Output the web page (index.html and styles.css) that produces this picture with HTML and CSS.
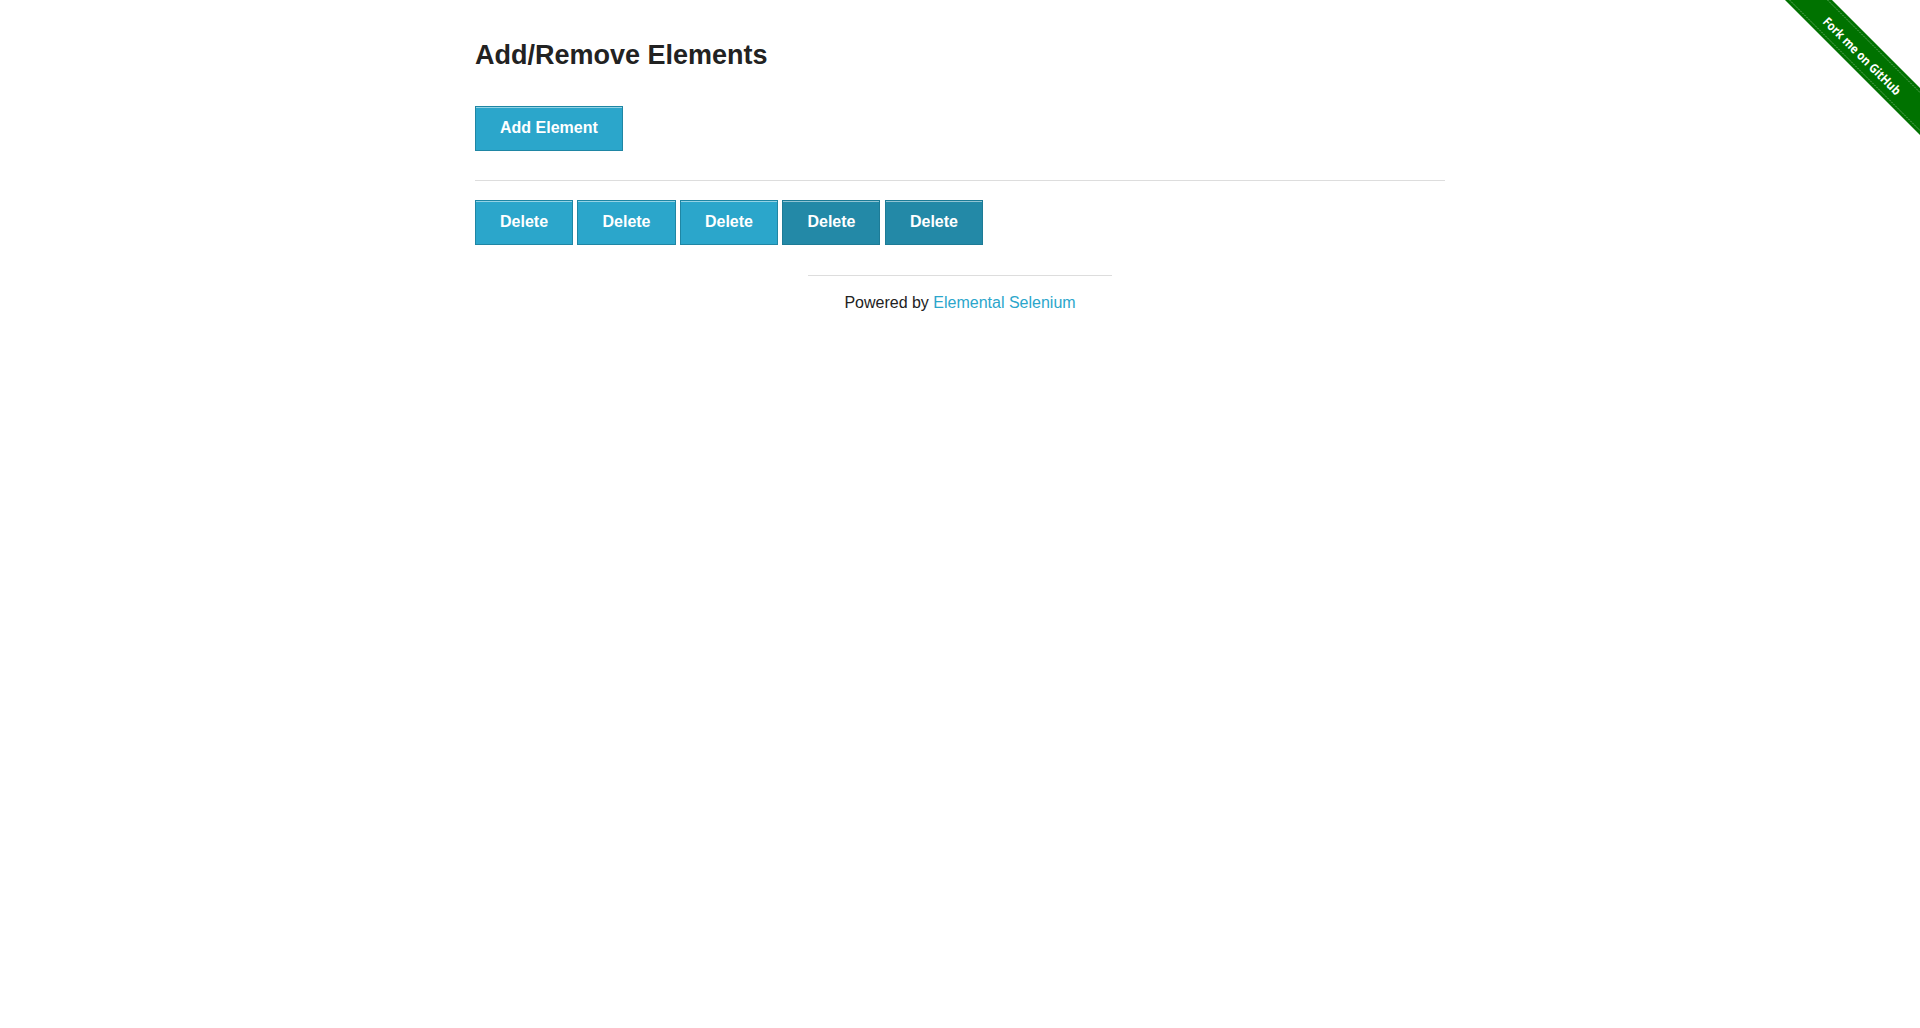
FILE: index.html
```html
<!DOCTYPE html>
<html lang="en">
<head>
<meta charset="utf-8">
<title>The Internet</title>
<link rel="stylesheet" href="styles.css">
</head>
<body>
<a class="ribbon" href="#" aria-label="Fork me on GitHub">
  <svg width="149" height="149" viewBox="0 0 149 149" xmlns="http://www.w3.org/2000/svg">
    <polygon points="14,0 61,0 149,88 149,135" fill="#007200"/>
    <line x1="18.5" y1="0" x2="149" y2="130.5" stroke="#5fa85f" stroke-width="1" stroke-dasharray="2 1"/>
    <line x1="56.5" y1="0" x2="149" y2="92.5" stroke="#5fa85f" stroke-width="1" stroke-dasharray="2 1"/>
    <text class="ribbon-text" x="0" y="0" transform="translate(91 56) rotate(45)" text-anchor="middle" dominant-baseline="central" textLength="104" lengthAdjust="spacingAndGlyphs">Fork me on GitHub</text>
  </svg>
</a>
<div class="row">
  <div class="content">
    <h3 class="title">Add/Remove Elements</h3>
    <div class="example">
      <button class="btn">Add Element</button>
    </div>
    <hr class="divider">
    <div class="elements"><button class="btn">Delete</button> <button class="btn">Delete</button> <button class="btn">Delete</button> <button class="btn btn-dark">Delete</button> <button class="btn btn-dark">Delete</button></div>
  </div>
</div>
<div class="footer">
  <hr class="footer-rule">
  <div class="footer-text">Powered by <a class="footer-link" href="#">Elemental Selenium</a></div>
</div>
</body>
</html>
```
FILE: styles.css
```css
html, body {
  margin: 0;
  padding: 0;
  background: #fff;
}
body {
  font-family: "Liberation Sans", Arial, Helvetica, sans-serif;
  font-size: 16px;
  color: #222;
}
.ribbon {
  position: absolute;
  top: 0;
  right: 0;
  display: block;
  width: 149px;
  height: 149px;
}
.ribbon svg {
  display: block;
}
.ribbon-text {
  font-family: "Open Sans", "DejaVu Sans", sans-serif;
  font-weight: 700;
  font-size: 12.5px;
  fill: #fff;
}
.row {
  width: 970px;
  margin: 0 auto;
}
.title {
  margin: 39px 0 0;
  font-size: 27px;
  line-height: 32px;
  font-weight: 700;
  color: #222;
}
.example {
  margin-top: 35px;
  height: 44px;
}
.btn {
  display: inline-block;
  margin: 0;
  padding: 12px 24px 13px;
  font-family: "Liberation Sans", Arial, Helvetica, sans-serif;
  font-size: 16px;
  line-height: 18px;
  font-weight: 700;
  color: #fff;
  background: #2ba6cb;
  border: 1px solid #1f86a4;
  box-shadow: inset 0 1px 0 rgba(255, 255, 255, 0.5);
  border-radius: 0;
  cursor: pointer;
  vertical-align: top;
}
.btn-dark {
  background: #2389a7;
  border-color: #1d7b96;
}
.divider {
  margin: 30px 0 0;
  border: 0;
  border-top: 1px solid #ddd;
  height: 0;
}
.elements {
  margin-top: 19px;
  height: 45px;
  font-size: 16px;
}
.footer {
  width: 304px;
  margin: 30px auto 0;
  text-align: center;
}
.footer-rule {
  margin: 0;
  border: 0;
  border-top: 1px solid #ddd;
  height: 0;
}
.footer-text {
  margin-top: 18px;
  font-size: 16px;
  line-height: 18px;
  color: #222;
}
.footer-link {
  color: #2ba6cb;
  text-decoration: none;
}
```
